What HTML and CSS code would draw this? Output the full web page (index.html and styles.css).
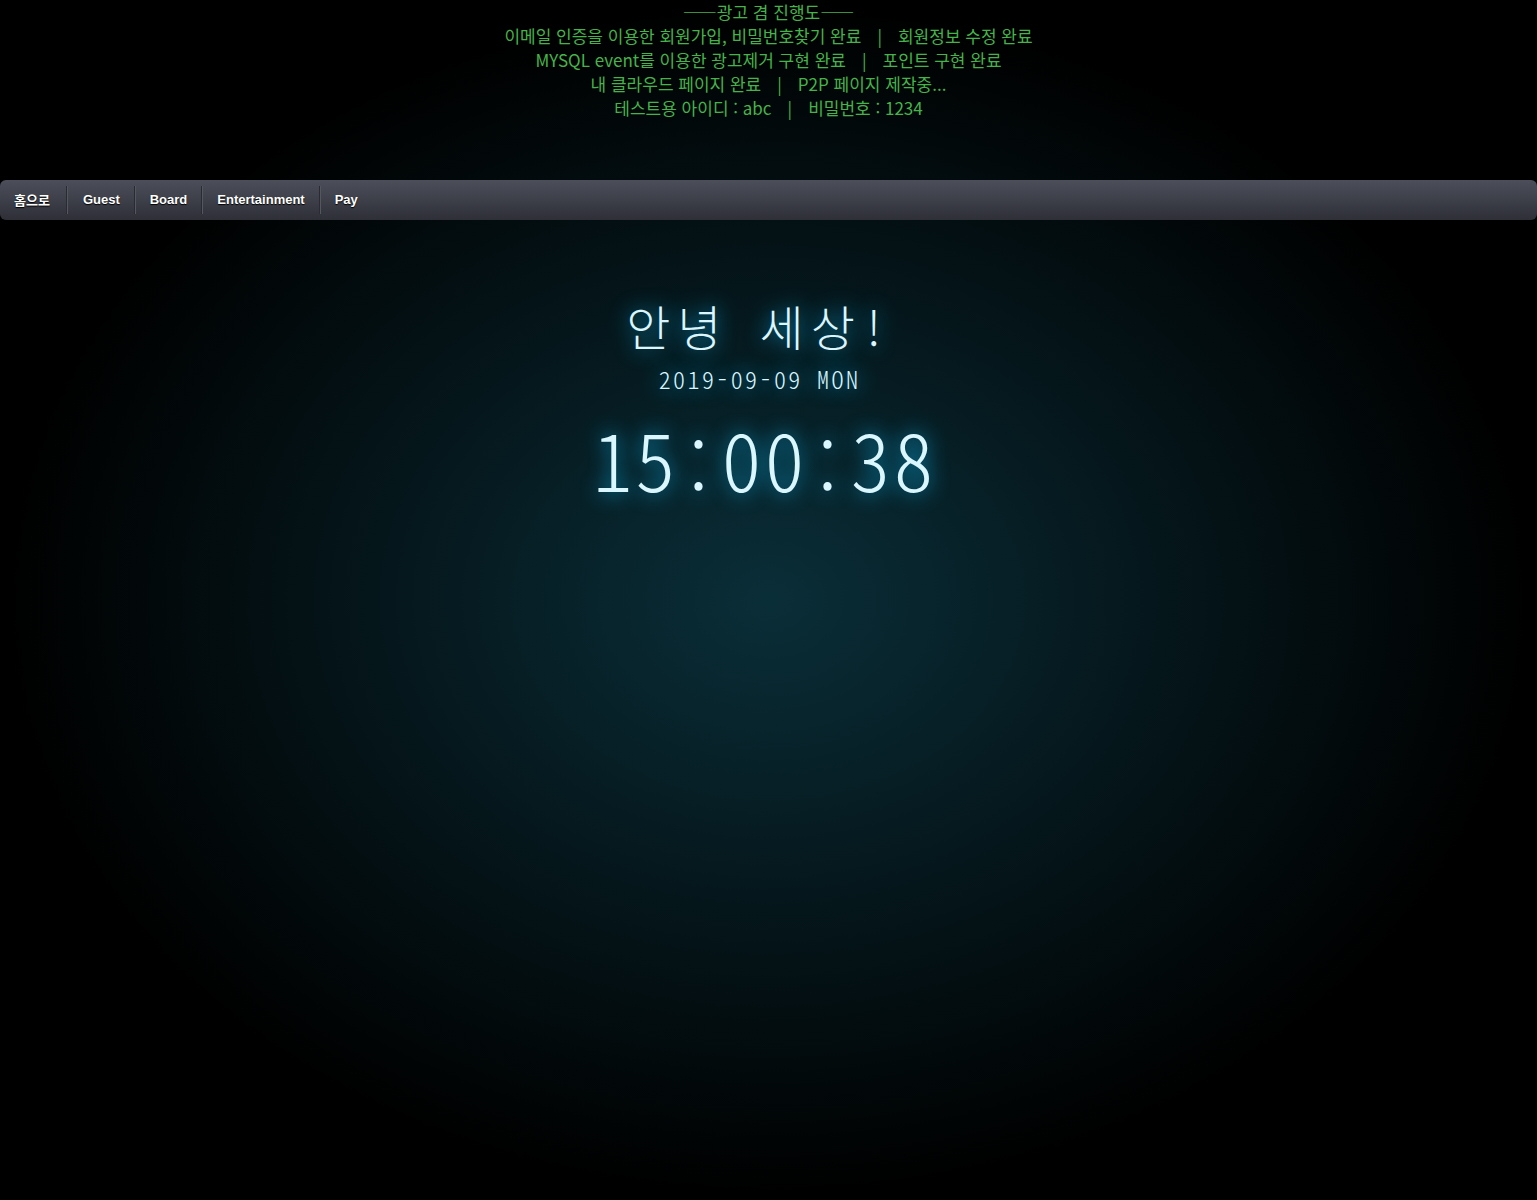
FILE: index.html
```html
<!DOCTYPE html>
<html lang="ko">
<head>
<meta charset="utf-8">
<title>Clock</title>
<link rel="stylesheet" href="styles.css">
</head>
<body>
<div class="notice">
  <p>——광고 겸 진행도——</p>
  <p>이메일 인증을 이용한 회원가입, 비밀번호찾기 완료<span class="sep">|</span>회원정보 수정 완료</p>
  <p>MYSQL event를 이용한 광고제거 구현 완료<span class="sep">|</span>포인트 구현 완료</p>
  <p>내 클라우드 페이지 완료<span class="sep">|</span>P2P 페이지 제작중...</p>
  <p>테스트용 아이디 : abc<span class="sep">|</span>비밀번호 : 1234</p>
</div>
<nav class="menu">
  <a class="item" href="#">홈으로</a>
  <a class="item" href="#">Guest</a>
  <a class="item" href="#">Board</a>
  <a class="item" href="#">Entertainment</a>
  <a class="item" href="#">Pay</a>
</nav>
<div class="clock">
  <p class="hello">안녕 세상!</p>
  <p class="date">2019-09-09 MON</p>
  <p class="time">15<span class="colon">:</span>00<span class="colon">:</span>38</p>
</div>
</body>
</html>
```
FILE: styles.css
```css
html, body {
  margin: 0;
  padding: 0;
}
body {
  min-height: 1200px;
  background: radial-gradient(ellipse at center, #0a2e38 0%, #000000 70%);
  background-color: #000;
  font-family: "Noto Sans CJK KR", "Noto Sans", sans-serif;
}
.notice {
  text-align: center;
  color: #46b34a;
  font-size: 17px;
  line-height: 24px;
}
.notice p {
  margin: 0;
}
.sep {
  padding: 0 16px;
}
.menu {
  margin-top: 60px;
  height: 40px;
  display: flex;
  align-items: center;
  border-radius: 6px;
  background: linear-gradient(to bottom, #4c4e5a 0%, #3d3f49 50%, #2e2f37 100%);
}
.item {
  display: flex;
  align-items: center;
  height: 27px;
  padding: 0 14px 1px 15px;
  border-right: 1px solid #2a2b32;
  box-shadow: 1px 0 0 #55575f;
  color: #fff;
  text-decoration: none;
  font-family: "Liberation Sans", Arial, "Noto Sans CJK KR", sans-serif;
  font-weight: bold;
  font-size: 13px;
  text-shadow: 0 1px 1px #000;
}
.item:first-child {
  padding-left: 14px;
  padding-right: 16px;
}
.item:nth-child(2) {
  padding-left: 16px;
}
.item:last-child {
  border-right: none;
  box-shadow: none;
}
.clock {
  text-align: center;
  color: #daf6ff;
  text-shadow: 0 0 20px rgba(10, 175, 230, 1), 0 0 20px rgba(10, 175, 230, 0);
  font-family: "Noto Sans CJK KR", sans-serif;
  font-feature-settings: "hwid";
  font-weight: 300;
}
.clock p {
  margin: 0;
}
.hello {
  margin-top: 75px !important;
  padding-right: 18px;
  font-size: 48px;
  line-height: 60px;
  letter-spacing: 7px;
}
.date {
  margin-top: 9px !important;
  padding-right: 18px;
  font-size: 24px;
  line-height: 30px;
  letter-spacing: 0.1em;
}
.time {
  margin-top: 18px !important;
  padding-right: 8px;
  font-size: 80px;
  line-height: 90px;
  letter-spacing: 3px;
}
.colon {
  display: inline-block;
  vertical-align: -0.08em;
}
```
